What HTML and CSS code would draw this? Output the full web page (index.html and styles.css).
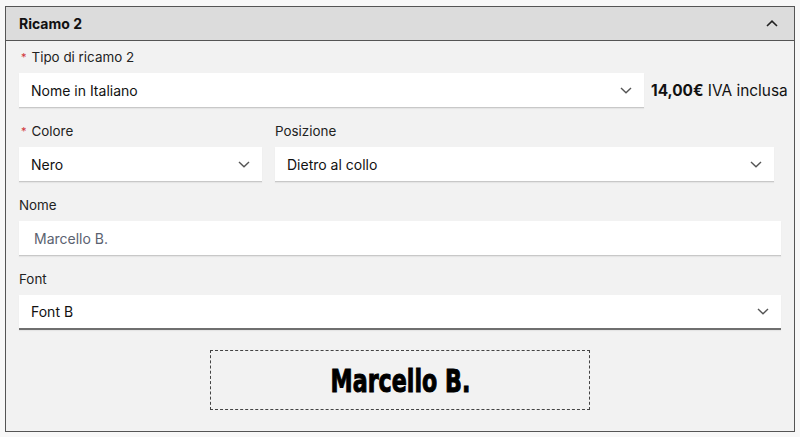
FILE: index.html
```html
<!DOCTYPE html>
<html lang="it">
<head>
  <meta charset="UTF-8" />
  <title>Ricamo 2</title>
  <link rel="stylesheet" href="styles.css">
</head>
<body>
  <div class="panel">
    <div class="panel-head">
      <span class="panel-title">Ricamo 2</span>
      <svg class="chev" width="12" height="7" viewBox="0 0 12 7"><path d="M1 6 L6 1.2 L11 6" fill="none" stroke="#222" stroke-width="1.6"/></svg>
    </div>

    <div class="panel-body">
      <div class="field">
        <label class="label"><span class="req">*</span>Tipo di ricamo 2</label>
        <div class="row">
          <div class="select w-tipo">
            <span>Nome in Italiano</span>
            <svg class="chev" width="12" height="7" viewBox="0 0 12 7"><path d="M1 1 L6 5.8 L11 1" fill="none" stroke="#555" stroke-width="1.4"/></svg>
          </div>
          <div class="price"><strong>14,00€</strong> IVA inclusa</div>
        </div>
      </div>

      <div class="row two">
        <div class="field">
          <label class="label"><span class="req">*</span>Colore</label>
          <div class="select w-colore">
            <span>Nero</span>
            <svg class="chev" width="12" height="7" viewBox="0 0 12 7"><path d="M1 1 L6 5.8 L11 1" fill="none" stroke="#555" stroke-width="1.4"/></svg>
          </div>
        </div>
        <div class="field">
          <label class="label">Posizione</label>
          <div class="select w-pos">
            <span>Dietro al collo</span>
            <svg class="chev" width="12" height="7" viewBox="0 0 12 7"><path d="M1 1 L6 5.8 L11 1" fill="none" stroke="#555" stroke-width="1.4"/></svg>
          </div>
        </div>
      </div>

      <div class="field">
        <label class="label">Nome</label>
        <div class="input">Marcello B.</div>
      </div>

      <div class="field">
        <label class="label">Font</label>
        <div class="select active">
          <span>Font B</span>
          <svg class="chev" width="12" height="7" viewBox="0 0 12 7"><path d="M1 1 L6 5.8 L11 1" fill="none" stroke="#555" stroke-width="1.4"/></svg>
        </div>
      </div>

      <div class="preview"><span class="preview-text">Marcello B.</span></div>
    </div>
  </div>
</body>
</html>
```

FILE: styles.css
```css
* {
  margin: 0;
  padding: 0;
  box-sizing: border-box;
}

body {
  font-family: Inter, "Noto Sans", sans-serif;
  background-color: #f8f8f8;
  color: #111;
  padding: 6px 5px;
}

.panel {
  width: 790px;
  border: 1px solid #555;
  background: #f2f2f2;
}

.panel-head {
  height: 34px;
  background: #dcdcdc;
  border-bottom: 1px solid #555;
  display: flex;
  align-items: center;
  justify-content: space-between;
  padding: 0 16px 0 13px;
}

.panel-title {
  font-size: 14px;
  font-weight: 700;
}

.panel-body {
  padding: 6px 13px 21px 13px;
}

.field {
  margin-bottom: 13px;
}

.label {
  display: block;
  font-size: 13.4px;
  line-height: 20px;
  margin-bottom: 6px;
  color: #222;
}

.req {
  color: #d0343a;
  font-size: 11px;
  margin: 0 5px 0 2px;
  vertical-align: top;
}

.row {
  display: flex;
  align-items: center;
  gap: 7px;
}

.row.two {
  gap: 13px;
}

.select,
.input {
  flex-shrink: 0;
  height: 35px;
  background: #fff;
  border-bottom: 1px solid #c8c8c8;
  box-shadow: 0 1px 1px rgba(0, 0, 0, 0.05);
  display: flex;
  align-items: center;
  justify-content: space-between;
  padding: 0 12px;
  font-size: 14px;
  color: #111;
}

.select.active {
  border-bottom: 2px solid #6f6f6f;
}

.input {
  padding-left: 15px;
  color: #5b6270;
}

.w-tipo { width: 625px; }
.w-colore { width: 243px; }
.w-pos { width: 499px; }

.price {
  font-size: 15.4px;
  white-space: nowrap;
}

.price strong {
  font-weight: 700;
}

.preview {
  width: 380px;
  height: 60px;
  margin: 20px auto 0;
  border: 1px dashed #444;
  display: flex;
  align-items: center;
  justify-content: center;
}

.preview-text {
  display: inline-block;
  font-family: "DejaVu Sans", sans-serif;
  font-weight: 700;
  font-size: 30px;
  color: #000;
  transform: scale(0.74, 1.08);
  -webkit-text-stroke: 1px #000;
}
```
